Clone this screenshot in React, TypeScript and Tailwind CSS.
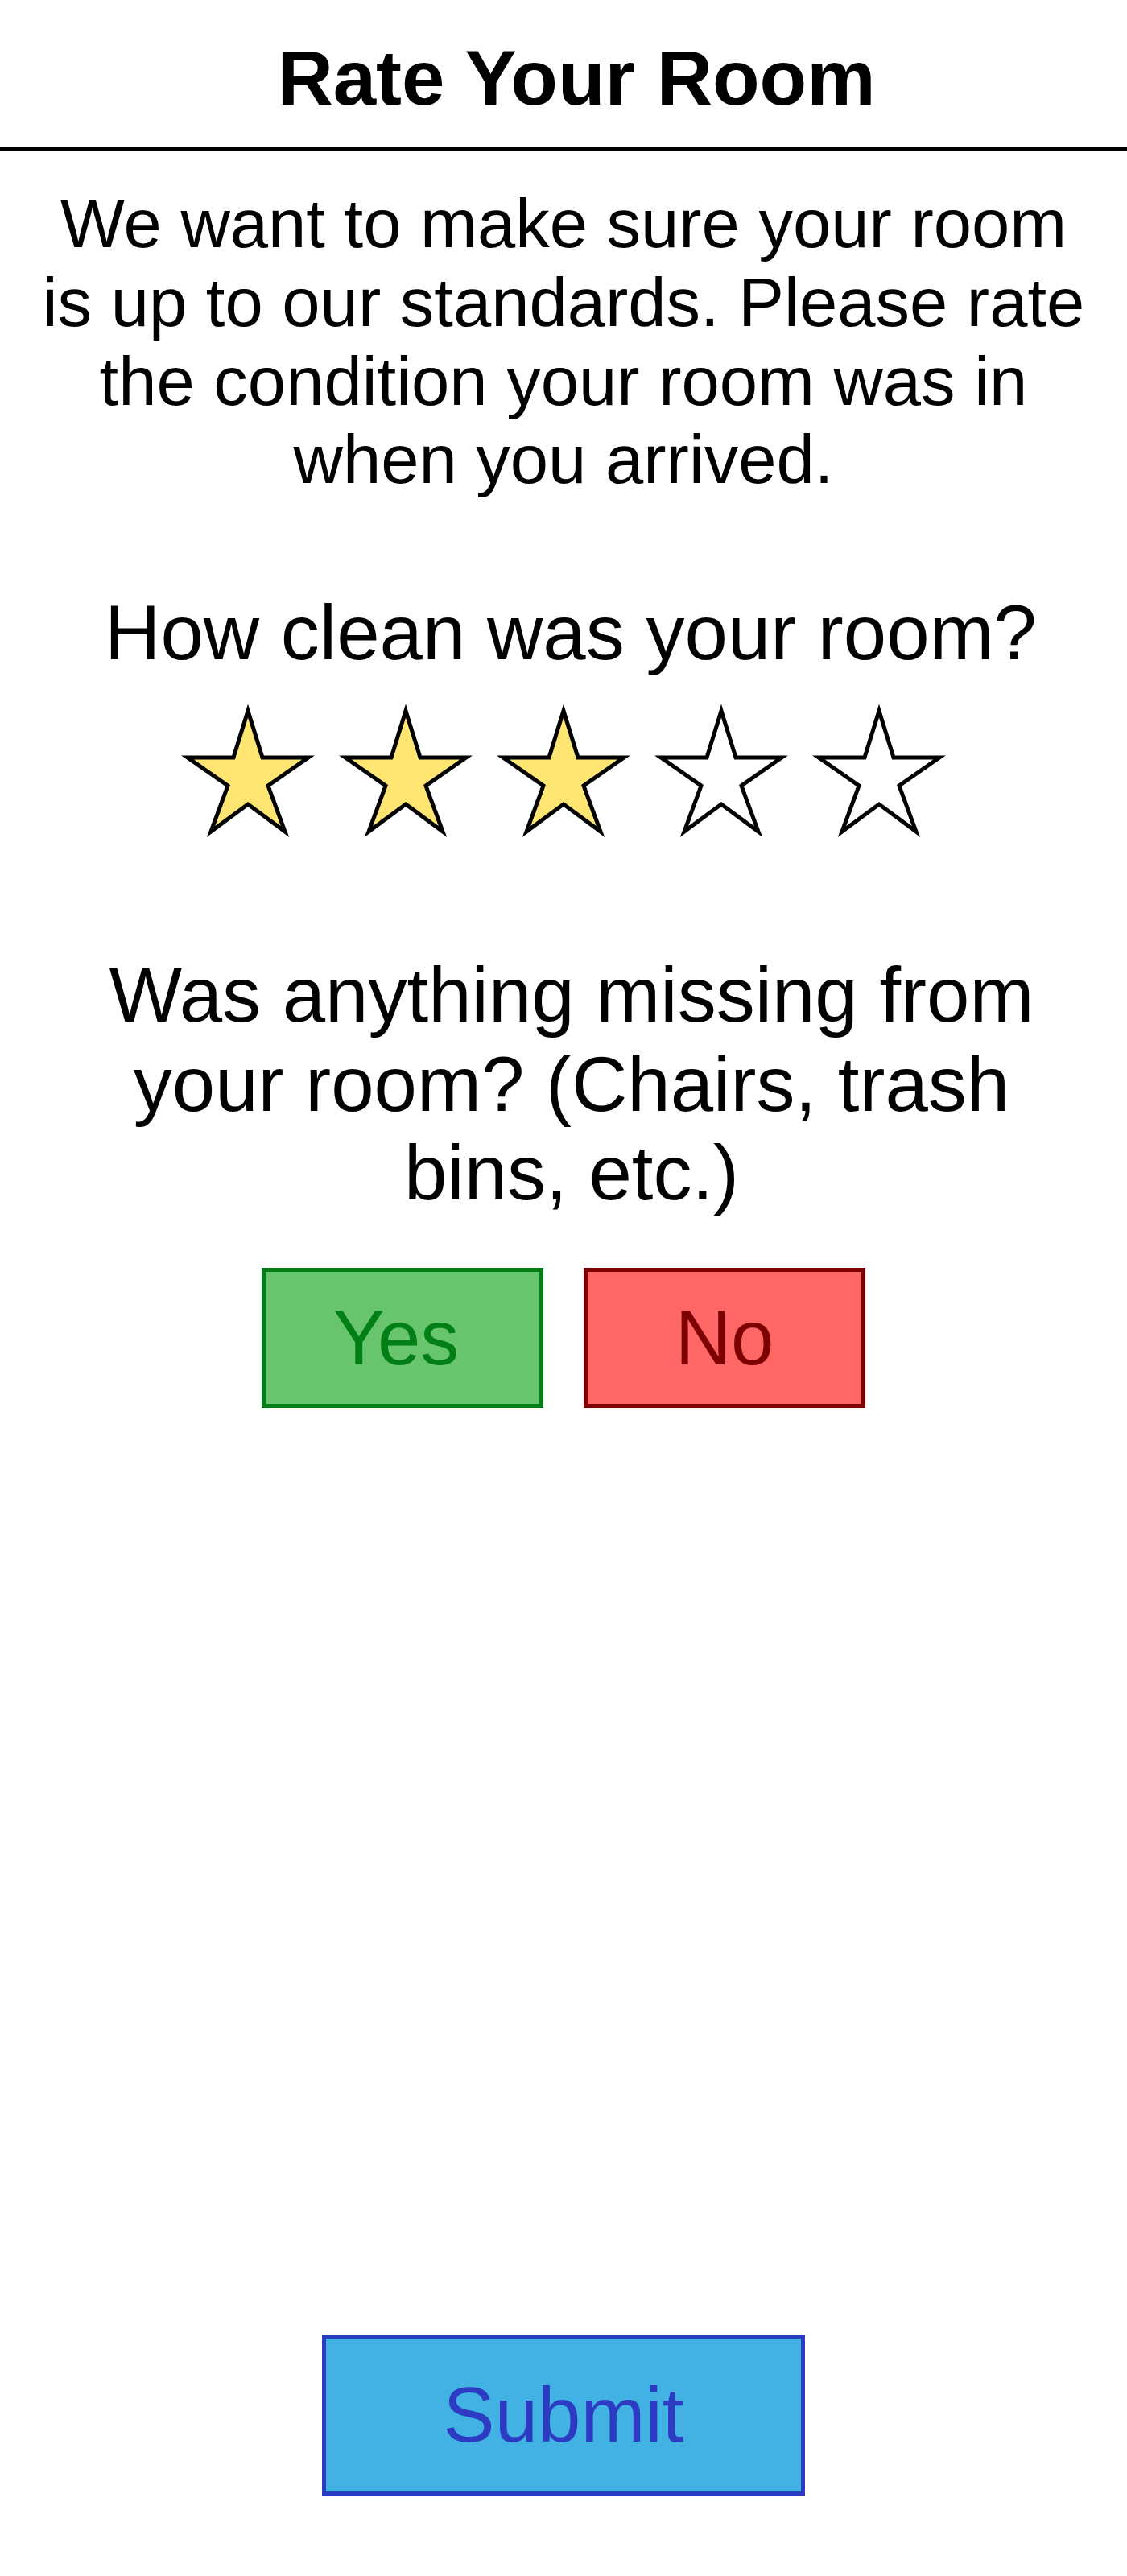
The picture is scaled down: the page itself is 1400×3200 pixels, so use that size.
import React from "react";

const STAR_POINTS =
  "82,8 64,66 7,66 57,101 36,158 82,124 128,158 107,101 157,66 100,66";

function Star({ filled }: { filled: boolean }) {
  return (
    <svg
      width="164"
      height="164"
      viewBox="0 0 164 164"
      className="block overflow-visible"
    >
      <polygon
        points={STAR_POINTS}
        fill={filled ? "#FFE672" : "#FFFFFF"}
        stroke="#000000"
        strokeWidth="5"
        strokeLinejoin="miter"
        strokeMiterlimit="10"
      />
    </svg>
  );
}

export default function App() {
  const rating = 3;
  return (
    <div
      className="flex h-[3200px] w-[1400px] flex-col bg-white text-black"
      style={{ fontFamily: '"Liberation Sans", Arial, Helvetica, sans-serif' }}
    >
      <header className="border-b-[5px] border-black pt-[42px] pb-[31px] pl-[32px] text-center">
        <h1 className="text-[96px] font-bold leading-[1.149]">Rate Your Room</h1>
      </header>

      <main className="flex flex-1 flex-col items-center">
        <p className="mt-[41px] text-center text-[85px] leading-[1.149]">
          We want to make sure your room
          <br />
          is up to our standards. Please rate
          <br />
          the condition your room was in
          <br />
          when you arrived.
        </p>

        <h2 className="mt-[111px] pl-[18px] text-center text-[96px] leading-[1.149]">
          How clean was your room?
        </h2>

        <div className="mt-[34px] flex gap-[32px]">
          {[1, 2, 3, 4, 5].map((i) => (
            <Star key={i} filled={i <= rating} />
          ))}
        </div>

        <h2 className="mt-[142px] pl-[20px] text-center text-[96px] leading-[1.149]">
          Was anything missing from
          <br />
          your room? (Chairs, trash
          <br />
          bins, etc.)
        </h2>

        <div className="mt-[63px] flex gap-[50px]">
          <button className="flex h-[174px] w-[350px] items-center justify-center border-[5px] border-[#007F16] bg-[#69C46E] pr-[16px] text-[96px] leading-none text-[#007F16]">
            Yes
          </button>
          <button className="flex h-[174px] w-[350px] items-center justify-center border-[5px] border-[#7F0000] bg-[#FF6666] text-[96px] leading-none text-[#7F0000]">
            No
          </button>
        </div>

        <div className="flex-1" />

        <button className="mb-[100px] flex h-[200px] w-[600px] items-center justify-center border-[5px] border-[#2C3BC2] bg-[#41B2E3] text-[96px] leading-none text-[#2C3BC2]">
          Submit
        </button>
      </main>
    </div>
  );
}
